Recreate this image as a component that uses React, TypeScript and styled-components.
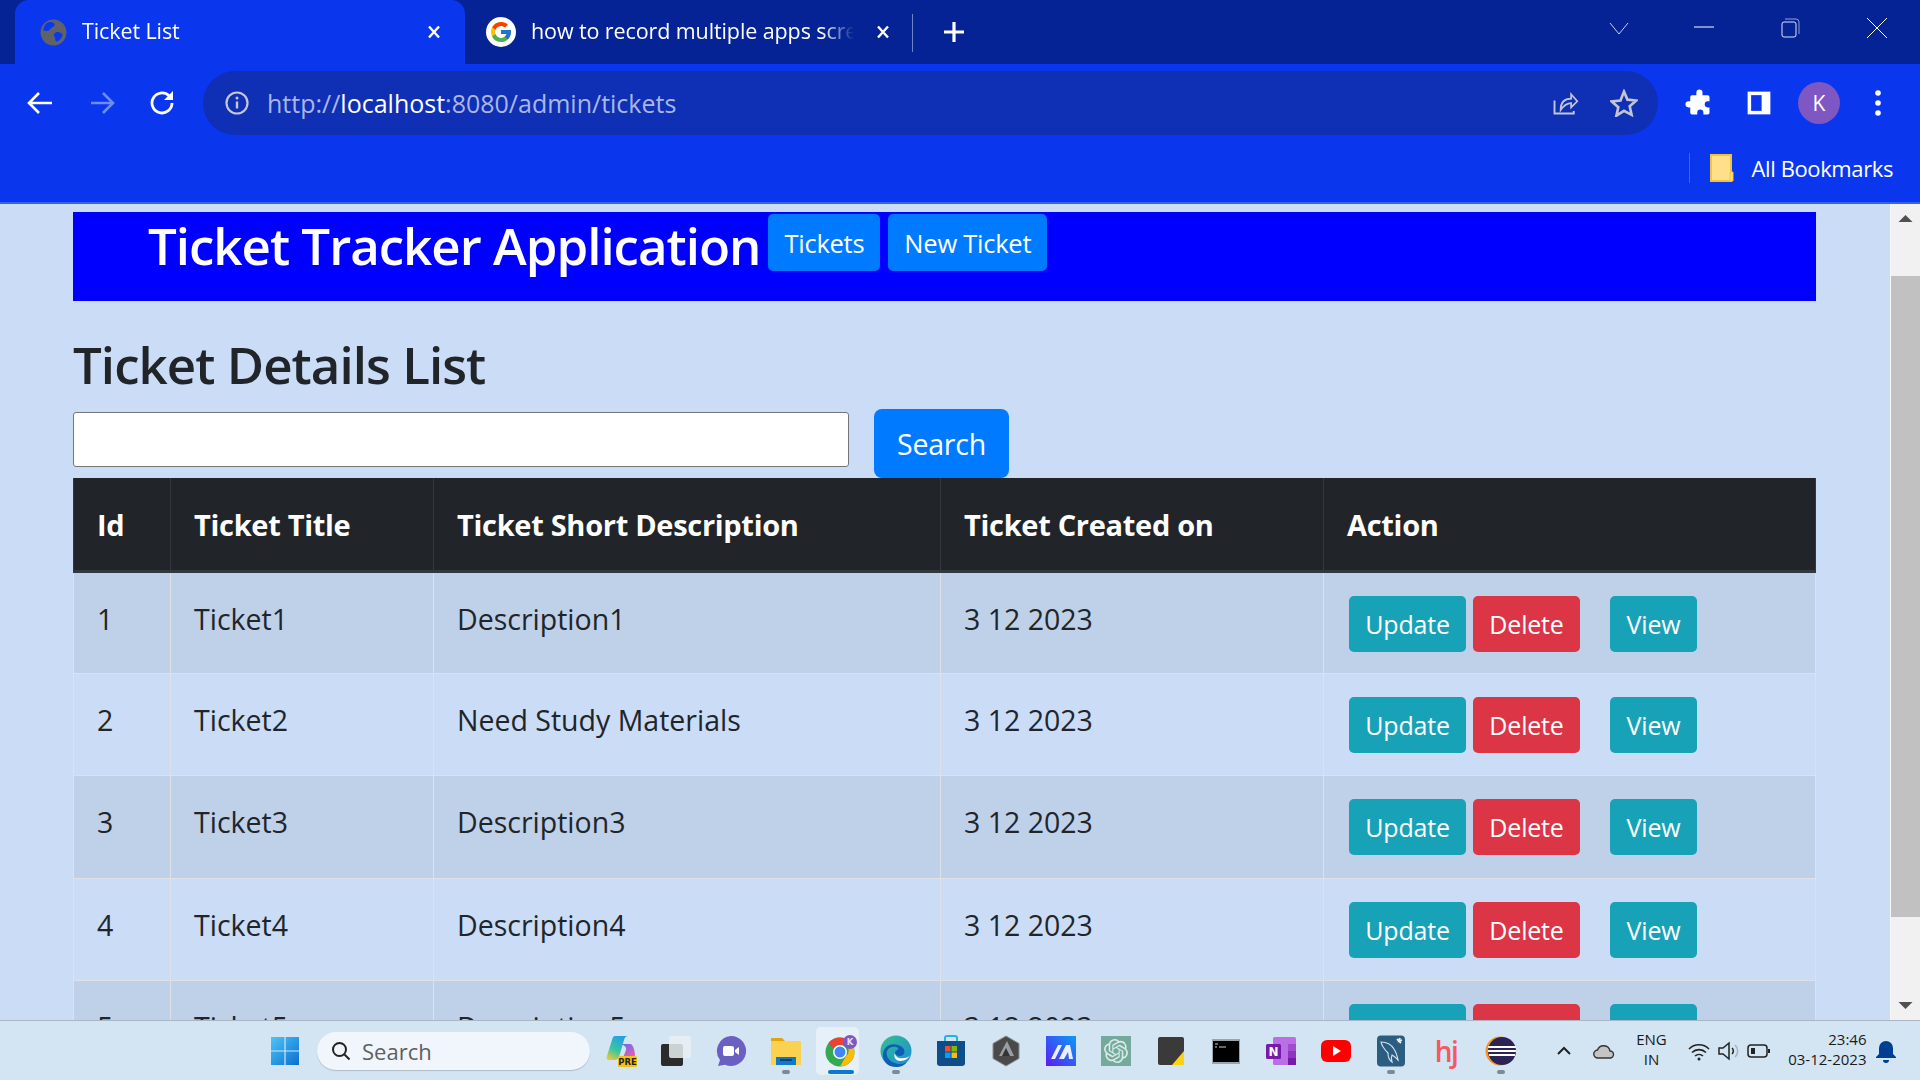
import React from "react";
import styled, { createGlobalStyle } from "styled-components";
import { FcGoogle } from "react-icons/fc";
import { SiOpenai } from "react-icons/si";

const GlobalStyle = createGlobalStyle`
  * { box-sizing: border-box; }
  html, body { margin: 0; padding: 0; height: 100%; overflow: hidden; }
  body { font-family: "Open Sans", "Noto Sans", sans-serif; color: #212529; }
`;

const Screen = styled.div`
  width: 1920px;
  height: 1080px;
  display: flex;
  flex-direction: column;
  overflow: hidden;
`;

/* ---------- browser chrome ---------- */
const TabStrip = styled.div`
  height: 64px;
  flex: none;
  display: flex;
  align-items: stretch;
  padding-left: 15px;
  background: #052394;
  color: #fff;
`;

const Tab = styled.div<{ $active?: boolean }>`
  width: ${(p) => (p.$active ? 450 : 447)}px;
  display: flex;
  align-items: center;
  padding-left: ${(p) => (p.$active ? 25 : 21)}px;
  border-radius: 14px 14px 0 0;
  background: ${(p) => (p.$active ? "#0a37ee" : "transparent")};
  font-size: 21.5px;
  letter-spacing: -0.1px;
`;

const TabIcon = styled.span`
  width: 30px;
  height: 30px;
  flex: none;
  display: flex;
  align-items: center;
  justify-content: center;
  border-radius: 50%;
  background: #fff;
`;

const GlobeIcon = styled.svg`
  width: 27px;
  height: 27px;
  flex: none;
`;

const TabTitle = styled.span<{ $w: number; $gap: number }>`
  width: ${(p) => p.$w}px;
  margin: 0 ${(p) => p.$gap}px 4px 15px;
  white-space: nowrap;
  overflow: hidden;
  mask-image: linear-gradient(to right, #000 90%, transparent 100%);
`;

const TabClose = styled.svg`
  width: 16px;
  height: 16px;
  flex: none;
`;

const TabDivider = styled.div`
  width: 1px;
  height: 38px;
  margin: 14px 0 0 0;
  background: #6f83c8;
`;

const NewTab = styled.svg`
  width: 24px;
  height: 24px;
  margin: 20px 0 0 29px;
  flex: none;
`;

const WindowControls = styled.div`
  margin-left: auto;
  padding-top: 16px;
  display: flex;
  align-items: flex-start;
`;

const WindowButton = styled.svg<{ $gap: number }>`
  width: 24px;
  height: 24px;
  margin-right: ${(p) => p.$gap}px;
  flex: none;
`;

const Toolbar = styled.div`
  height: 78px;
  flex: none;
  display: flex;
  align-items: center;
  padding: 7px 0;
  background: #0a37ee;
`;

const NavIcon = styled.svg<{ $w?: number }>`
  width: ${(p) => p.$w ?? 61}px;
  height: 30px;
  flex: none;
`;

const Omnibox = styled.div`
  width: 1455px;
  height: 64px;
  margin: 0 27px 0 10px;
  padding: 0 20px;
  flex: none;
  display: flex;
  align-items: center;
  border-radius: 32px;
  background: #0f2fb5;
  color: #a9b7e6;
  font-size: 25px;
`;

const InfoIcon = styled.svg`
  width: 26px;
  height: 26px;
  flex: none;
  margin-left: 1px;
`;

const UrlText = styled.span`
  margin-left: 17px;
  strong { color: #fff; font-weight: 400; }
`;

const OmniIcons = styled.div`
  margin-left: auto;
  display: flex;
  gap: 31px;
`;

const OmniIcon = styled.svg`
  width: 28px;
  height: 28px;
  flex: none;
`;

const Avatar = styled.div`
  width: 42px;
  height: 42px;
  flex: none;
  display: flex;
  align-items: center;
  justify-content: center;
  border-radius: 50%;
  background: #7e57c2;
  color: #fff;
  font-size: 21px;
  margin: 0 24px 0 0;
`;

const ToolIcon = styled.svg<{ $gap?: number }>`
  width: 28px;
  height: 28px;
  flex: none;
  margin-right: ${(p) => p.$gap ?? 0}px;
`;

const BookmarksBar = styled.div`
  height: 62px;
  flex: none;
  display: flex;
  align-items: center;
  justify-content: flex-end;
  padding: 0 27px 8px 0;
  background: #0a37ee;
  border-bottom: 2px solid #3463f2;
  color: #fff;
  font-size: 22px;
  letter-spacing: -0.4px;
`;

const BookmarkDivider = styled.div`
  width: 1px;
  height: 30px;
  margin-right: 20px;
  background: #4467e0;
`;

const FolderIcon = styled.svg`
  width: 24px;
  height: 28px;
  margin-right: 18px;
  flex: none;
`;

/* ---------- page ---------- */
const Viewport = styled.div`
  flex: 1;
  min-height: 0;
  display: flex;
  background: #cadcf6;
`;

const Page = styled.main`
  flex: 1;
  min-width: 0;
  padding: 8px 74px 0 73px;
  overflow: hidden;
`;

const Navbar = styled.nav`
  height: 89px;
  display: flex;
  align-items: flex-start;
  padding: 2px 0 0 75px;
  background: #0000ff;
`;

const Brand = styled.h1`
  margin: 0 8px 0 0;
  font-size: 51px;
  line-height: 62px;
  font-weight: 600;
  color: #fff;
  letter-spacing: -1px;
  white-space: nowrap;
`;

const NavButton = styled.a`
  height: 57px;
  margin-right: 8px;
  padding: 0 16px;
  display: flex;
  align-items: center;
  border-radius: 5px;
  background: #007bff;
  color: #fff;
  font-size: 25.5px;
  letter-spacing: -0.25px;
`;

const PageTitle = styled.h2`
  margin: 25px 0 0 0;
  font-size: 51px;
  line-height: 76px;
  font-weight: 600;
  letter-spacing: -0.95px;
`;

const SearchRow = styled.form`
  display: flex;
  align-items: flex-start;
  height: 69px;
  margin: 7px 0 0 0;
`;

const SearchInput = styled.input`
  width: 776px;
  height: 55px;
  margin-top: 3px;
  border: 1px solid #767676;
  border-radius: 3px;
  background: #fff;
`;

const SearchButton = styled.button`
  width: 135px;
  height: 69px;
  margin-left: 25px;
  padding: 1px 0 0 0;
  border: none;
  border-radius: 8px;
  background: #007bff;
  color: #fff;
  font-family: inherit;
  font-size: 28.5px;
  letter-spacing: -0.2px;
`;

const Table = styled.table`
  width: 1742px;
  table-layout: fixed;
  border-collapse: collapse;
`;

const HeadCell = styled.th<{ $w: number }>`
  width: ${(p) => p.$w}px;
  height: 93px;
  padding: 2px 23px 0;
  text-align: left;
  background: #212529;
  color: #fff;
  font-size: 29px;
  font-weight: 700;
  letter-spacing: -0.3px;
  border-left: 1px solid #32383e;
  border-right: 1px solid #32383e;
  border-bottom: 3px solid #32383e;
`;

const Row = styled.tr<{ $odd: boolean }>`
  background: ${(p) => (p.$odd ? "#bfd0e9" : "#cadcf6")};
`;

const Cell = styled.td`
  height: 102.4px;
  padding: 25px 23px 0;
  vertical-align: top;
  border: 1px solid #dee2e6;
  font-size: 28.5px;
  line-height: 42px;
`;

const ActionCell = styled(Cell)`
  padding-top: 23px;
  padding-left: 25px;
`;

const Actions = styled.div`
  display: flex;
`;

const RowButton = styled.a<{ $color: string; $w: number; $gap: number }>`
  width: ${(p) => p.$w}px;
  height: 56px;
  margin-right: ${(p) => p.$gap}px;
  display: flex;
  align-items: center;
  justify-content: center;
  border-radius: 5px;
  background: ${(p) => p.$color};
  color: #fff;
  font-size: 25px;
  letter-spacing: -0.2px;
`;

/* ---------- scrollbar ---------- */
const ScrollBar = styled.div`
  width: 30px;
  flex: none;
  display: flex;
  flex-direction: column;
  background: #f1f1f1;
  border-left: 1px solid #f7f7f7;
`;

const ScrollArrow = styled.svg`
  width: 29px;
  height: 30px;
  flex: none;
`;

const ScrollTrack = styled.div`
  flex: 1;
  padding: 42px 0 73px;
`;

const ScrollThumb = styled.div`
  height: 641px;
  background: #c1c1c1;
`;

/* ---------- taskbar ---------- */
const Taskbar = styled.footer`
  height: 60px;
  flex: none;
  display: flex;
  align-items: center;
  padding-left: 257px;
  background: #d3e5f3;
  border-top: 1px solid #a9b6c6;
`;

const Slot = styled.div<{ $active?: boolean }>`
  position: relative;
  width: 55px;
  height: 58px;
  flex: none;
  display: flex;
  align-items: center;
  justify-content: center;
  &::before {
    content: "";
    display: ${(p) => (p.$active ? "block" : "none")};
    position: absolute;
    left: 2px;
    top: 5px;
    width: 43px;
    height: 48px;
    border-radius: 5px;
    background: #e6f0f8;
  }
`;

const Running = styled.span<{ $active?: boolean }>`
  position: absolute;
  left: 50%;
  bottom: 6px;
  width: ${(p) => (p.$active ? 26 : 8)}px;
  height: 4px;
  margin-left: ${(p) => (p.$active ? -13 : -4)}px;
  border-radius: 2px;
  background: ${(p) => (p.$active ? "#0a78d4" : "#7d8a96")};
`;

const AppIcon = styled.svg`
  position: relative;
  width: 32px;
  height: 32px;
  flex: none;
`;

const OpenAiTile = styled.div`
  width: 30px;
  height: 30px;
  display: flex;
  align-items: center;
  justify-content: center;
  background: #74aa9c;
  color: #dcebe6;
  font-size: 24px;
`;

const HjLogo = styled.span`
  font-family: "Open Sans", sans-serif;
  font-size: 28px;
  line-height: 1;
  font-weight: 600;
  color: #f25a5f;
  letter-spacing: -1.5px;
`;

const SearchPill = styled.div`
  width: 273px;
  height: 38px;
  margin: 0 3.5px 0 5px;
  padding-left: 14px;
  flex: none;
  display: flex;
  align-items: center;
  border-radius: 19px;
  background: #f0f6fb;
  box-shadow: 0 1px 1px #b0bcc8;
  color: #5c6063;
  font-size: 22px;
`;

const PillIcon = styled.svg`
  width: 20px;
  height: 20px;
  margin-right: 11px;
  flex: none;
`;

const TrayCell = styled.div<{ $w: number; $left?: number }>`
  width: ${(p) => p.$w}px;
  margin-left: ${(p) => p.$left ?? 0}px;
  flex: none;
  display: flex;
  align-items: center;
  justify-content: center;
`;

const TrayIcon = styled.svg`
  width: 24px;
  height: 24px;
  flex: none;
`;

const TrayText = styled.div`
  display: flex;
  flex-direction: column;
  align-items: center;
  padding-bottom: 3px;
  font-size: 15px;
  line-height: 20px;
  color: #1a1a1a;
`;

const Clock = styled(TrayText)`
  width: 91px;
  flex: none;
  align-items: flex-end;
  white-space: nowrap;
`;

/* ---------- drawings ---------- */
const Globe = () => (
  <GlobeIcon viewBox="0 0 24 24">
    <circle cx="12" cy="12" r="11.5" fill="#5f6368" />
    <path d="M7 3c3-1 6 0 6 2s-3 2-4 4-4 2-6 1c0-3 2-6 4-7zM14 12c2-1 5 0 6 2 0 2-3 6-5 6s-1-3-2-4-1-3 1-4z" fill="#0a37ee" />
  </GlobeIcon>
);

const CloseX = () => (
  <TabClose viewBox="0 0 16 16">
    <path d="M3 2.5l10 11M13 2.5l-10 11" stroke="#fff" strokeWidth="2.4" />
  </TabClose>
);

const WindowsLogo = () => (
  <AppIcon viewBox="0 0 32 32">
    <defs>
      <linearGradient id="win" x1="0" y1="0" x2="1" y2="1">
        <stop offset="0" stopColor="#4dc6f7" />
        <stop offset="1" stopColor="#0a6fd0" />
      </linearGradient>
    </defs>
    <path d="M2 2h13.400v13.400H2zM16.600 2H30v13.400H16.600zM2 16.600h13.400V30H2zM16.600 16.600H30V30H16.600z" fill="url(#win)" />
  </AppIcon>
);

const Copilot = () => (
  <AppIcon viewBox="0 0 32 32">
    <defs>
      <linearGradient id="cop1" x1="0.7" y1="0" x2="0.2" y2="1">
        <stop offset="0" stopColor="#1f9fe8" />
        <stop offset="0.6" stopColor="#3cc6a0" />
        <stop offset="1" stopColor="#e6c73a" />
      </linearGradient>
      <linearGradient id="cop2" x1="0.2" y1="0" x2="0.8" y2="1">
        <stop offset="0" stopColor="#6f6be8" />
        <stop offset="1" stopColor="#ef5fa8" />
      </linearGradient>
    </defs>
    <path d="M10 1h13c-2 0-3 1-4 4l-5 17c-1 2-2 3-5 3H4c-2 0-3-2-2-4L7 5c.7-2.500 1.500-4 3-4z" fill="url(#cop1)" />
    <path d="M16 9h9c2 0 3 2 4 5l1 5c0 3-1 4-4 4h-8l3-8c.5-2 0-4-5-6z" fill="url(#cop2)" />
    <rect x="13" y="21" width="19" height="11" rx="1.500" fill="#f7c20c" />
    <text x="22.500" y="30" fontSize="8.500" fontWeight="800" fontFamily="DejaVu Sans" textAnchor="middle" fill="#222">PRE</text>
  </AppIcon>
);

const TaskView = () => (
  <AppIcon viewBox="0 0 32 32">
    <rect x="1" y="9" width="22" height="22" rx="2" fill="#2b2b2b" />
    <rect x="9" y="1" width="22" height="22" rx="2" fill="#e9eef2" opacity="0.85" />
  </AppIcon>
);

const TeamsMeet = () => (
  <AppIcon viewBox="0 0 32 32">
    <path d="M16 1a15 15 0 1 1-6 28.700L3 31l2-6A15 15 0 0 1 16 1z" fill="#6b5fc2" />
    <rect x="8" y="11" width="11" height="10" rx="2" fill="#fff" />
    <path d="M20 15l4-3v8l-4-3z" fill="#fff" />
  </AppIcon>
);

const Explorer = () => (
  <AppIcon viewBox="0 0 32 32">
    <path d="M1 3h11l3 3H1z" fill="#e3a50c" />
    <path d="M1 6h30v24H1z" fill="#fbd24f" />
    <rect x="6" y="22" width="20" height="8" fill="#0f78c8" />
    <rect x="10" y="24" width="12" height="2" fill="#0a3f6f" />
  </AppIcon>
);

const ChromeIcon = () => (
  <AppIcon viewBox="0 0 32 32">
    <circle cx="15" cy="17" r="14.500" fill="#34a853" />
    <path d="M15 2.500a14.500 14.500 0 0 1 12.600 7.300H15a7 7 0 0 0-6.500 4L3.400 8A14.500 14.500 0 0 1 15 2.500z" fill="#ea4335" />
    <path d="M27.600 9.800A14.500 14.500 0 0 1 15 31.500l6-10.500a7 7 0 0 0 0-11.200z" fill="#fbbc05" />
    <circle cx="15" cy="17" r="7" fill="#fff" />
    <circle cx="15" cy="17" r="5.500" fill="#4285f4" />
    <circle cx="25" cy="7" r="7" fill="#7e57c2" />
    <text x="25" y="10" fontSize="8.500" fontWeight="700" fontFamily="DejaVu Sans" textAnchor="middle" fill="#e8dcf8">K</text>
  </AppIcon>
);

const EdgeIcon = () => (
  <AppIcon viewBox="0 0 32 32">
    <defs>
      <linearGradient id="edge" x1="0" y1="0" x2="1" y2="1">
        <stop offset="0" stopColor="#36c08a" />
        <stop offset="1" stopColor="#1a8bdc" />
      </linearGradient>
    </defs>
    <circle cx="16" cy="16" r="15.500" fill="url(#edge)" />
    <path d="M3 22C2 10 14 6 22 12c4 3 3 9-2 9-2 0-5-1-5-3 0-3 4-3 3-5-2-2-9-2-11 3-2 6 4 13 13 13 3 0 5-1 7-2-3 4-7 5-11 5-7 0-12-4-13-10z" fill="#0c5fb4" />
    <path d="M15 18c0 4 4 6 9 5 3 0 5-1 6-3-1 3-5 6-10 6-4 0-7-4-5-8z" fill="#fff" />
  </AppIcon>
);

const StoreIcon = () => (
  <AppIcon viewBox="0 0 32 32">
    <path d="M10 6V3a2 2 0 0 1 2-2h8a2 2 0 0 1 2 2v3" fill="none" stroke="#2bb0e6" strokeWidth="2" />
    <path d="M2 6h28v22a3 3 0 0 1-3 3H5a3 3 0 0 1-3-3z" fill="#0f4c8a" />
    <rect x="10" y="11" width="5.500" height="5.500" fill="#f25022" />
    <rect x="16.500" y="11" width="5.500" height="5.500" fill="#7fba00" />
    <rect x="10" y="17.500" width="5.500" height="5.500" fill="#00a4ef" />
    <rect x="16.500" y="17.500" width="5.500" height="5.500" fill="#ffb900" />
  </AppIcon>
);

const HexIcon = () => (
  <AppIcon viewBox="0 0 32 32">
    <path d="M16 1l13 7.500v15L16 31 3 23.500v-15z" fill="#4a4a4a" stroke="#8a8f94" strokeWidth="1" />
    <path d="M17 6l7 15H9z" fill="#9a9da1" />
    <path d="M16 13l4 8h-8z" fill="#333" />
  </AppIcon>
);

const MIcon = () => (
  <AppIcon viewBox="0 0 32 32">
    <defs>
      <linearGradient id="mi" x1="0" y1="1" x2="1" y2="0">
        <stop offset="0" stopColor="#5b1cf5" />
        <stop offset="1" stopColor="#0a9bf5" />
      </linearGradient>
    </defs>
    <rect x="1" y="1" width="30" height="30" fill="url(#mi)" />
    <path d="M6 24l7-14h4l-7 14zM14 24l7-14h4l3 14h-4l-1-7-4 7z" fill="#e8eefc" />
  </AppIcon>
);

const Sticky = () => (
  <AppIcon viewBox="0 0 32 32">
    <rect x="3" y="2" width="26" height="28" rx="2" fill="#3a3a3a" />
    <path d="M29 16v14H17z" fill="#fcd116" />
  </AppIcon>
);

const Terminal = () => (
  <AppIcon viewBox="0 0 32 32">
    <rect x="2" y="4" width="28" height="25" fill="#9aa4ab" />
    <rect x="3" y="6" width="26" height="21" fill="#000" />
    <path d="M5 9h3M5 12h2M9 12h7" stroke="#d0d0d0" strokeWidth="1.200" />
  </AppIcon>
);

const OneNote = () => (
  <AppIcon viewBox="0 0 32 32">
    <rect x="8" y="2" width="23" height="28" rx="1.500" fill="#ba6fe6" />
    <rect x="23" y="9" width="8" height="7" fill="#a24ccf" />
    <rect x="23" y="16" width="8" height="7" fill="#8f35bd" />
    <rect x="23" y="23" width="8" height="7" fill="#7719aa" />
    <rect x="1" y="9" width="15" height="15" rx="1.500" fill="#7719aa" />
    <text x="8.500" y="21" fontSize="12" fontWeight="700" fontFamily="DejaVu Sans" textAnchor="middle" fill="#fff">N</text>
  </AppIcon>
);

const YouTube = () => (
  <AppIcon viewBox="0 0 32 32">
    <rect x="1" y="5" width="30" height="22" rx="6" fill="#f00" />
    <path d="M13 11l8 5-8 5z" fill="#fff" />
  </AppIcon>
);

const MysqlIcon = () => (
  <AppIcon viewBox="0 0 32 32">
    <rect x="2" y="0.500" width="28" height="31" rx="4" fill="#2b5d80" />
    <path d="M6 7c5 0 10 2 13 7 2 3 3 6 4 11-2-2-4-4-6-5-1 2-1 4 0 7-3-2-4-5-4-9-3-3-6-6-7-11z" fill="none" stroke="#cfe0ea" strokeWidth="1.200" />
    <path d="M22 4l4 4M25 3l-1 3 3-1" fill="none" stroke="#e6eff4" strokeWidth="1.800" />
  </AppIcon>
);

const Eclipse = () => (
  <AppIcon viewBox="0 0 32 32">
    <circle cx="15" cy="16" r="14.500" fill="#f7941e" />
    <circle cx="17" cy="16" r="14" fill="#2c2255" />
    <path d="M3 12h28M3 16h28M4 20h26" stroke="#fff" strokeWidth="1.800" />
  </AppIcon>
);

const rows = [
  { id: 1, title: "Ticket1", desc: "Description1" },
  { id: 2, title: "Ticket2", desc: "Need Study Materials" },
  { id: 3, title: "Ticket3", desc: "Description3" },
  { id: 4, title: "Ticket4", desc: "Description4" },
  { id: 5, title: "Ticket5", desc: "Description5" },
];

export default function App() {
  return (
    <Screen>
      <GlobalStyle />
      <TabStrip>
        <Tab $active>
          <Globe />
          <TabTitle $w={344} $gap={0}>Ticket List</TabTitle>
          <CloseX />
        </Tab>
        <Tab>
          <TabIcon>
            <FcGoogle size={24} />
          </TabIcon>
          <TabTitle $w={323} $gap={21}>how to record multiple apps screen</TabTitle>
          <CloseX />
        </Tab>
        <TabDivider />
        <NewTab viewBox="0 0 24 24">
          <path d="M12 2v20M2 12h20" stroke="#fff" strokeWidth="3.200" />
        </NewTab>
        <WindowControls>
          <WindowButton $gap={61} viewBox="0 0 24 24">
            <path d="M3 7l9 11 9-11" fill="none" stroke="#c6d0ee" strokeWidth="1" />
          </WindowButton>
          <WindowButton $gap={62} viewBox="0 0 24 24">
            <path d="M2 11h20" stroke="#fff" strokeWidth="1" />
          </WindowButton>
          <WindowButton $gap={63} viewBox="0 0 24 24">
            <rect x="4" y="6" width="14" height="15" rx="2" fill="none" stroke="#dde4f7" strokeWidth="1" />
            <path d="M7 3h11a3 3 0 0 1 3 3v12" fill="none" stroke="#8fa2dc" strokeWidth="1" />
          </WindowButton>
          <WindowButton $gap={31} viewBox="0 0 24 24">
            <path d="M2 2l20 20M22 2L2 22" stroke="#fff" strokeWidth="1" />
          </WindowButton>
        </WindowControls>
      </TabStrip>

      <Toolbar>
        <NavIcon $w={71} viewBox="0 0 71 30">
          <path d="M52 15H29M39 5L29 15l10 10" fill="none" stroke="#fff" strokeWidth="2.600" />
        </NavIcon>
        <NavIcon viewBox="0 0 61 30">
          <path d="M20 15h22M32 5l10 10-10 10" fill="none" stroke="#6d8cf6" strokeWidth="2.600" />
        </NavIcon>
        <NavIcon viewBox="0 0 61 30">
          <path d="M40 15a10 10 0 1 1-3-7.200" fill="none" stroke="#fff" strokeWidth="2.800" />
          <path d="M41 3v9h-9z" fill="#fff" />
        </NavIcon>
        <Omnibox>
          <InfoIcon viewBox="0 0 26 26">
            <circle cx="13" cy="13" r="10.500" fill="none" stroke="#c4c8d4" strokeWidth="2.200" />
            <path d="M13 11.500v7" stroke="#c4c8d4" strokeWidth="2.400" />
            <circle cx="13" cy="8" r="1.500" fill="#c4c8d4" />
          </InfoIcon>
          <UrlText>
            http://<strong>localhost</strong>:8080/admin/tickets
          </UrlText>
          <OmniIcons>
            <OmniIcon viewBox="0 0 32 32">
              <path d="M4 13v15h22v-3" fill="none" stroke="#c2c6d2" strokeWidth="2.200" />
              <path d="M11 24c0-8 4-13 12-13V6l7 8-7 7v-5c-5 0-8 2-12 8z" fill="none" stroke="#c2c6d2" strokeWidth="2" />
            </OmniIcon>
            <OmniIcon viewBox="0 0 32 32">
              <path d="M16 3l4 9.200 10 1-7.500 6.600 2.200 9.700L16 25l-8.700 5.500 2.200-9.700L2 14.200l10-1z" fill="none" stroke="#c2c6d2" strokeWidth="3" />
            </OmniIcon>
          </OmniIcons>
        </Omnibox>
        <ToolIcon $gap={32} viewBox="0 0 32 32">
          <path d="M13 4a3.500 3.500 0 0 1 7 0v3h6a2 2 0 0 1 2 2v5h-2a3.500 3.500 0 0 0 0 7h2v6a2 2 0 0 1-2 2h-5v-2a3.500 3.500 0 0 0-7 0v2H8a2 2 0 0 1-2-2v-6H4a3.500 3.500 0 0 1 0-7h2V9a2 2 0 0 1 2-2h5z" fill="#fff" />
        </ToolIcon>
        <ToolIcon $gap={25} viewBox="0 0 32 32">
          <path d="M3 3h26v26H3z" fill="#fff" />
          <path d="M7 7h12v18H7z" fill="#0a37ee" />
        </ToolIcon>
        <Avatar>K</Avatar>
        <ToolIcon viewBox="0 0 32 32">
          <circle cx="16" cy="4.500" r="3.200" fill="#fff" />
          <circle cx="16" cy="16" r="3.200" fill="#fff" />
          <circle cx="16" cy="27.500" r="3.200" fill="#fff" />
        </ToolIcon>
      </Toolbar>

      <BookmarksBar>
        <BookmarkDivider />
        <FolderIcon viewBox="0 0 24 28">
          <path d="M1 1h20v26H1z" fill="#ffe08a" stroke="#f2c43d" strokeWidth="2" />
          <path d="M20 18h3v9h-3z" fill="#ffe08a" stroke="#f2c43d" strokeWidth="1" />
        </FolderIcon>
        All Bookmarks
      </BookmarksBar>

      <Viewport>
        <Page>
          <Navbar>
            <Brand>Ticket Tracker Application</Brand>
            <NavButton>Tickets</NavButton>
            <NavButton>New Ticket</NavButton>
          </Navbar>
          <PageTitle>Ticket Details List</PageTitle>
          <SearchRow>
            <SearchInput />
            <SearchButton type="button">Search</SearchButton>
          </SearchRow>
          <Table>
            <thead>
              <tr>
                <HeadCell $w={97}>Id</HeadCell>
                <HeadCell $w={263}>Ticket Title</HeadCell>
                <HeadCell $w={507}>Ticket Short Description</HeadCell>
                <HeadCell $w={383}>Ticket Created on</HeadCell>
                <HeadCell $w={492}>Action</HeadCell>
              </tr>
            </thead>
            <tbody>
              {rows.map((r) => (
                <Row key={r.id} $odd={r.id % 2 === 1}>
                  <Cell>{r.id}</Cell>
                  <Cell>{r.title}</Cell>
                  <Cell>{r.desc}</Cell>
                  <Cell>3 12 2023</Cell>
                  <ActionCell>
                    <Actions>
                      <RowButton $color="#17a2b8" $w={117} $gap={7}>Update</RowButton>
                      <RowButton $color="#dc3545" $w={107} $gap={30}>Delete</RowButton>
                      <RowButton $color="#17a2b8" $w={87} $gap={0}>View</RowButton>
                    </Actions>
                  </ActionCell>
                </Row>
              ))}
            </tbody>
          </Table>
        </Page>
        <ScrollBar>
          <ScrollArrow viewBox="0 0 29 30">
            <path d="M14.500 11l7 7h-14z" fill="#505050" />
          </ScrollArrow>
          <ScrollTrack>
            <ScrollThumb />
          </ScrollTrack>
          <ScrollArrow viewBox="0 0 29 30">
            <path d="M14.500 19l7-7h-14z" fill="#505050" />
          </ScrollArrow>
        </ScrollBar>
      </Viewport>

      <Taskbar>
        <Slot><WindowsLogo /></Slot>
        <SearchPill>
          <PillIcon viewBox="0 0 20 20">
            <circle cx="8.500" cy="8.500" r="6.500" fill="none" stroke="#222" strokeWidth="2" />
            <path d="M13.500 13.500l5 5" stroke="#222" strokeWidth="2" />
          </PillIcon>
          Search
        </SearchPill>
        <Slot><Copilot /></Slot>
        <Slot><TaskView /></Slot>
        <Slot><TeamsMeet /></Slot>
        <Slot><Explorer /><Running /></Slot>
        <Slot $active><ChromeIcon /><Running $active /></Slot>
        <Slot><EdgeIcon /><Running /></Slot>
        <Slot><StoreIcon /></Slot>
        <Slot><HexIcon /></Slot>
        <Slot><MIcon /></Slot>
        <Slot><OpenAiTile><SiOpenai /></OpenAiTile></Slot>
        <Slot><Sticky /></Slot>
        <Slot><Terminal /></Slot>
        <Slot><OneNote /></Slot>
        <Slot><YouTube /></Slot>
        <Slot><MysqlIcon /><Running /></Slot>
        <Slot><HjLogo>hj</HjLogo></Slot>
        <Slot><Eclipse /><Running /></Slot>

        <TrayCell $w={30} $left={20}>
          <TrayIcon viewBox="0 0 24 24">
            <path d="M6 15l6-6 6 6" fill="none" stroke="#222" strokeWidth="2" />
          </TrayIcon>
        </TrayCell>
        <TrayCell $w={50}>
          <TrayIcon viewBox="0 0 24 24">
            <path d="M6 19a4 4 0 0 1-.5-8 6.500 6.500 0 0 1 12.500 1 3.500 3.500 0 0 1 0 7z" fill="#c4c4c4" stroke="#333" strokeWidth="1.400" />
          </TrayIcon>
        </TrayCell>
        <TrayCell $w={46}>
          <TrayText><span>ENG</span><span>IN</span></TrayText>
        </TrayCell>
        <TrayCell $w={30} $left={9}>
          <TrayIcon viewBox="0 0 24 24">
            <path d="M2 10a14 14 0 0 1 20 0M5 13.500a10 10 0 0 1 14 0M8 17a6 6 0 0 1 8 0" fill="none" stroke="#222" strokeWidth="1.600" />
            <circle cx="12" cy="20" r="1.500" fill="#222" />
          </TrayIcon>
        </TrayCell>
        <TrayCell $w={28}>
          <TrayIcon viewBox="0 0 24 24">
            <path d="M3 9h4l6-5v16l-6-5H3z" fill="none" stroke="#222" strokeWidth="1.500" />
            <path d="M16 9a4 4 0 0 1 0 6" fill="none" stroke="#222" strokeWidth="1.500" />
            <path d="M19 6a8 8 0 0 1 0 12" fill="none" stroke="#a8b2bc" strokeWidth="1.500" />
          </TrayIcon>
        </TrayCell>
        <TrayCell $w={34}>
          <TrayIcon viewBox="0 0 24 24">
            <rect x="1" y="6" width="19" height="12" rx="3" fill="none" stroke="#222" strokeWidth="1.500" />
            <rect x="4" y="9" width="4" height="6" fill="#222" />
            <path d="M21 10h2v4h-2z" fill="#222" />
          </TrayIcon>
        </TrayCell>
        <Clock><span>23:46</span><span>03-12-2023</span></Clock>
        <TrayCell $w={38}>
          <TrayIcon viewBox="0 0 24 24">
            <path d="M12 2a7 7 0 0 1 7 7v6l3 3v1H2v-1l3-3V9a7 7 0 0 1 7-7z" fill="#003e92" />
            <path d="M9 21h6a3 3 0 0 1-6 0z" fill="#003e92" />
          </TrayIcon>
        </TrayCell>
      </Taskbar>
    </Screen>
  );
}
